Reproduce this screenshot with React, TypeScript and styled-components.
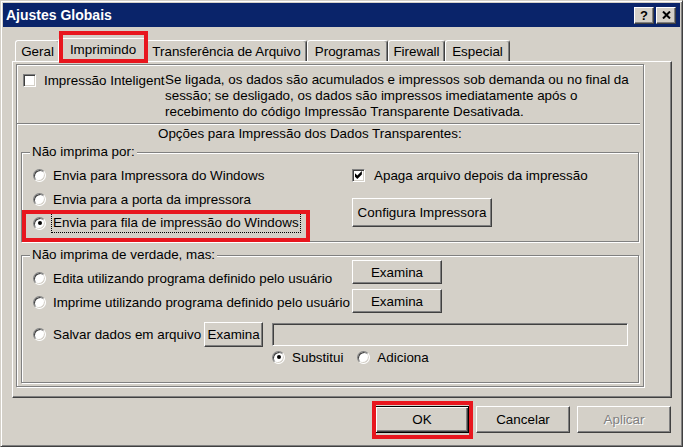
import React from 'react';
import styled, { createGlobalStyle } from 'styled-components';

const FACE = '#d4d0c8';
const SHADOW = '#808080';
const DARK = '#404040';

const GlobalStyle = createGlobalStyle`
  * { box-sizing: border-box; }
  html, body { margin: 0; padding: 0; background: ${FACE}; }
  body {
    font-family: "Liberation Sans", Arial, sans-serif;
    font-size: 13.4px;
    color: #000;
  }
`;

const Window = styled.div`
  position: relative;
  width: 683px;
  height: 447px;
  display: flex;
  flex-direction: column;
  background: ${FACE};
  border: 1px solid;
  border-color: ${FACE} ${DARK} ${DARK} ${FACE};
  box-shadow: inset 1px 1px #fff, inset -1px -1px ${SHADOW};
  padding: 2px;
`;

const TitleBar = styled.div`
  height: 24px;
  flex: none;
  display: flex;
  align-items: center;
  justify-content: space-between;
  padding: 0 4px 0 3px;
  background: #0a246a;
  color: #fff;
  font-weight: bold;
  font-size: 14px;
`;

const TitleButtons = styled.div`
  display: flex;
  gap: 2px;
`;

const TitleButton = styled.div`
  width: 20px;
  height: 17px;
  display: flex;
  align-items: center;
  justify-content: center;
  background: ${FACE};
  border: 1px solid;
  border-color: #fff ${DARK} ${DARK} #fff;
  box-shadow: inset -1px -1px ${SHADOW};
  color: #000;
  font-size: 13px;
  font-weight: bold;
`;

const Client = styled.div`
  flex: 1;
  display: flex;
  flex-direction: column;
  padding: 11px 8px 0 9px;
`;

const TabStrip = styled.div`
  display: flex;
  align-items: flex-end;
  height: 23px;
  padding-left: 3px;
`;

const Tab = styled.div<{ $w: number; $active?: boolean }>`
  position: relative;
  z-index: ${p => (p.$active ? 2 : 1)};
  width: ${p => p.$w + (p.$active ? 4 : 0)}px;
  height: ${p => (p.$active ? 24 : 21)}px;
  margin: ${p => (p.$active ? '0 -2px -1px' : '0')};
  padding-top: 3px;
  text-align: center;
  line-height: 15px;
  white-space: nowrap;
  background: ${FACE};
  border: 1px solid;
  border-bottom: none;
  border-color: #fff ${DARK} transparent #fff;
  border-radius: 3px 3px 0 0;
  box-shadow: inset -1px 0 ${SHADOW};
`;

const TabPanel = styled.div`
  width: 660px;
  height: 337px;
  border: 1px solid;
  border-color: #fff ${DARK} ${DARK} #fff;
  box-shadow: inset -1px -1px ${SHADOW};
  padding: 2px 0 0 3px;
`;

const Frame = styled.div`
  width: 628px;
  height: 323px;
  display: flex;
  flex-direction: column;
  border: 1px solid ${SHADOW};
  box-shadow: inset 1px 1px #fff, 1px 1px #fff;
`;

const TopSection = styled.div`
  display: flex;
  align-items: flex-start;
  padding: 7px 0 3px 6px;
`;

const Field = styled.label<{ $h?: number; $gap?: number }>`
  display: flex;
  align-items: center;
  gap: ${p => p.$gap ?? 7}px;
  height: ${p => p.$h ?? 24}px;
  white-space: nowrap;
  flex: none;
`;

// the original control is too narrow for its caption, so the caption is cut
const ClippedLabel = styled.span<{ $w: number }>`
  width: ${p => p.$w}px;
  overflow: hidden;
  white-space: nowrap;
`;

const Description = styled.div`
  line-height: 16px;
  white-space: nowrap;
`;

const Separator = styled.div`
  height: 2px;
  margin-right: 3px;
  border-top: 1px solid ${SHADOW};
  border-bottom: 1px solid #fff;
`;

const Caption = styled.div`
  line-height: 16px;
  margin-top: 1px;
  padding-left: 141px;
`;

const GroupBox = styled.div<{ $top: number; $bottom: number }>`
  width: 618px;
  margin: ${p => p.$top}px 0 0 4px;
  padding: 0 0 ${p => p.$bottom}px 11px;
  border: 1px solid ${SHADOW};
  box-shadow: inset 1px 1px #fff, 1px 1px #fff;
`;

const Legend = styled.div<{ $after?: number }>`
  width: fit-content;
  margin: -9px 0 ${p => p.$after ?? 0}px -3px;
  padding: 0 2px;
  line-height: 16px;
  background: ${FACE};
`;

const GroupBody = styled.div`
  display: flex;
`;

const Column = styled.div<{ $w?: number; $top?: number; $gap?: number }>`
  display: flex;
  flex-direction: column;
  align-items: flex-start;
  width: ${p => (p.$w ? `${p.$w}px` : 'auto')};
  padding-top: ${p => p.$top ?? 0}px;
  gap: ${p => p.$gap ?? 0}px;
`;

const Row = styled.div<{ $h: number; $top?: number; $indent?: number }>`
  display: flex;
  align-items: center;
  height: ${p => p.$h}px;
  margin-top: ${p => p.$top ?? 0}px;
  padding-left: ${p => p.$indent ?? 0}px;
`;

const Radio = styled.span<{ $checked?: boolean }>`
  width: 13px;
  height: 13px;
  flex: none;
  display: flex;
  align-items: center;
  justify-content: center;
  border-radius: 50%;
  background: #fff;
  border: 1px solid;
  border-color: ${SHADOW} #fff #fff ${SHADOW};
  box-shadow: inset 1px 1px ${DARK}, inset -1px -1px ${FACE};
  &::after {
    content: '';
    display: ${p => (p.$checked ? 'block' : 'none')};
    width: 4px;
    height: 4px;
    border-radius: 50%;
    background: #000;
  }
`;

const Box = styled.span`
  width: 13px;
  height: 13px;
  flex: none;
  display: flex;
  align-items: center;
  justify-content: center;
  background: #fff;
  border: 1px solid;
  border-color: ${SHADOW} #fff #fff ${SHADOW};
  box-shadow: inset 1px 1px ${DARK}, inset -1px -1px ${FACE};
`;

const FocusText = styled.span`
  line-height: 16px;
  outline: 1px dotted #000;
  outline-offset: 1px;
`;

const Button = styled.button<{ $w: number; $h: number; $default?: boolean; $gapLeft?: number }>`
  width: ${p => p.$w}px;
  height: ${p => p.$h}px;
  flex: none;
  display: flex;
  align-items: center;
  justify-content: center;
  padding: 0;
  margin: 0 0 0 ${p => p.$gapLeft ?? 0}px;
  font: inherit;
  color: #000;
  background: ${FACE};
  border: 1px solid;
  border-color: ${p => (p.$default ? '#000' : `#fff ${DARK} ${DARK} #fff`)};
  box-shadow: ${p =>
    p.$default
      ? `inset 1px 1px #fff, inset -1px -1px ${DARK}, inset -2px -2px ${SHADOW}`
      : `inset -1px -1px ${SHADOW}`};
  &:disabled {
    color: ${SHADOW};
    text-shadow: 1px 1px #fff;
  }
`;

const TextBox = styled.div<{ $w: number; $gapLeft?: number }>`
  width: ${p => p.$w}px;
  height: 23px;
  flex: none;
  margin-left: ${p => p.$gapLeft ?? 0}px;
  background: ${FACE};
  border: 1px solid;
  border-color: ${SHADOW} #fff #fff ${SHADOW};
  box-shadow: inset 1px 1px ${DARK}, inset -1px -1px ${FACE};
`;

const ActionRow = styled.div`
  display: flex;
  justify-content: flex-end;
  gap: 7px;
  margin-top: 8px;
  padding-right: 1px;
`;

// red annotation boxes drawn over the screenshot
const Highlight = styled.div<{ $x: number; $y: number; $w: number; $h: number }>`
  position: absolute;
  left: ${p => p.$x - 1}px;
  top: ${p => p.$y - 1}px;
  width: ${p => p.$w}px;
  height: ${p => p.$h}px;
  border: 4px solid #e8161e;
  pointer-events: none;
  z-index: 5;
`;

const CheckMark = () => (
  <svg width="8" height="8" viewBox="0 0 7 7">
    <polygon points="0,2 2,4 6,0 6,3 2,7 0,5" fill="#000" />
  </svg>
);

const CloseGlyph = () => (
  <svg width="9" height="8" viewBox="0 0 9 8">
    <path d="M1 0.5 L8 7.5 M8 0.5 L1 7.5" stroke="#000" strokeWidth="2" />
  </svg>
);

const tabs = [
  { label: 'Geral', w: 45 },
  { label: 'Imprimindo', w: 86, active: true },
  { label: 'Transferência de Arquivo', w: 161 },
  { label: 'Programas', w: 81 },
  { label: 'Firewall', w: 57 },
  { label: 'Especial', w: 65 },
];

export default function App() {
  return (
    <>
      <GlobalStyle />
      <Window>
        <TitleBar>
          <span>Ajustes Globais</span>
          <TitleButtons>
            <TitleButton>?</TitleButton>
            <TitleButton>
              <CloseGlyph />
            </TitleButton>
          </TitleButtons>
        </TitleBar>

        <Client>
          <TabStrip>
            {tabs.map(t => (
              <Tab key={t.label} $w={t.w} $active={t.active}>
                {t.label}
              </Tab>
            ))}
          </TabStrip>

          <TabPanel>
            <Frame>
              <TopSection>
                <Field $h={16} $gap={8}>
                  <Box />
                  <ClippedLabel $w={121}>Impressão Inteligente</ClippedLabel>
                </Field>
                <Description>
                  Se ligada, os dados são acumulados e impressos sob demanda ou no final da
                  <br />
                  sessão; se desligado, os dados são impressos imediatamente após o
                  <br />
                  recebimento do código Impressão Transparente Desativada.
                </Description>
              </TopSection>
              <Separator />
              <Caption>Opções para Impressão dos Dados Transparentes:</Caption>

              <GroupBox $top={10} $bottom={6}>
                <Legend>Não imprima por:</Legend>
                <GroupBody>
                  <Column $w={319} $top={3}>
                    <Field>
                      <Radio />
                      Envia para Impressora do Windows
                    </Field>
                    <Field>
                      <Radio />
                      Envia para a porta da impressora
                    </Field>
                    <Field>
                      <Radio $checked />
                      <FocusText>Envia para fila de impressão do Windows</FocusText>
                    </Field>
                  </Column>
                  <Column $top={3} $gap={11}>
                    <Field $gap={9}>
                      <Box>
                        <CheckMark />
                      </Box>
                      Apaga arquivo depois da impressão
                    </Field>
                    <Button $w={140} $h={29}>Configura Impressora</Button>
                  </Column>
                </GroupBody>
              </GroupBox>

              <GroupBox $top={13} $bottom={15}>
                <Legend $after={-3}>Não imprima de verdade, mas:</Legend>
                <GroupBody>
                  <Column $w={319} $top={6}>
                    <Field>
                      <Radio />
                      Edita utilizando programa definido pelo usuário
                    </Field>
                    <Field>
                      <Radio />
                      Imprime utilizando programa definido pelo usuário
                    </Field>
                  </Column>
                  <Column $gap={5}>
                    <Button $w={90} $h={24}>Examina</Button>
                    <Button $w={90} $h={24}>Examina</Button>
                  </Column>
                </GroupBody>
                <Row $h={26} $top={7}>
                  <Field $h={26}>
                    <Radio />
                    Salvar dados em arquivo
                  </Field>
                  <Button $w={59} $h={25} $gapLeft={3}>Examina</Button>
                  <TextBox $w={356} $gapLeft={9} />
                </Row>
                <Row $h={20} $indent={239}>
                  <Field $h={20}>
                    <Radio $checked />
                    Substitui
                  </Field>
                  <Field $h={20} style={{ marginLeft: 14 }}>
                    <Radio />
                    Adiciona
                  </Field>
                </Row>
              </GroupBox>
            </Frame>
          </TabPanel>

          <ActionRow>
            <Button $w={94} $h={27} $default>OK</Button>
            <Button $w={94} $h={27}>Cancelar</Button>
            <Button $w={94} $h={27} disabled>Aplicar</Button>
          </ActionRow>
        </Client>

        <Highlight $x={59} $y={31} $w={89} $h={32} />
        <Highlight $x={22} $y={210} $w={288} $h={32} />
        <Highlight $x={372} $y={401} $w={101} $h={38} />
      </Window>
    </>
  );
}
